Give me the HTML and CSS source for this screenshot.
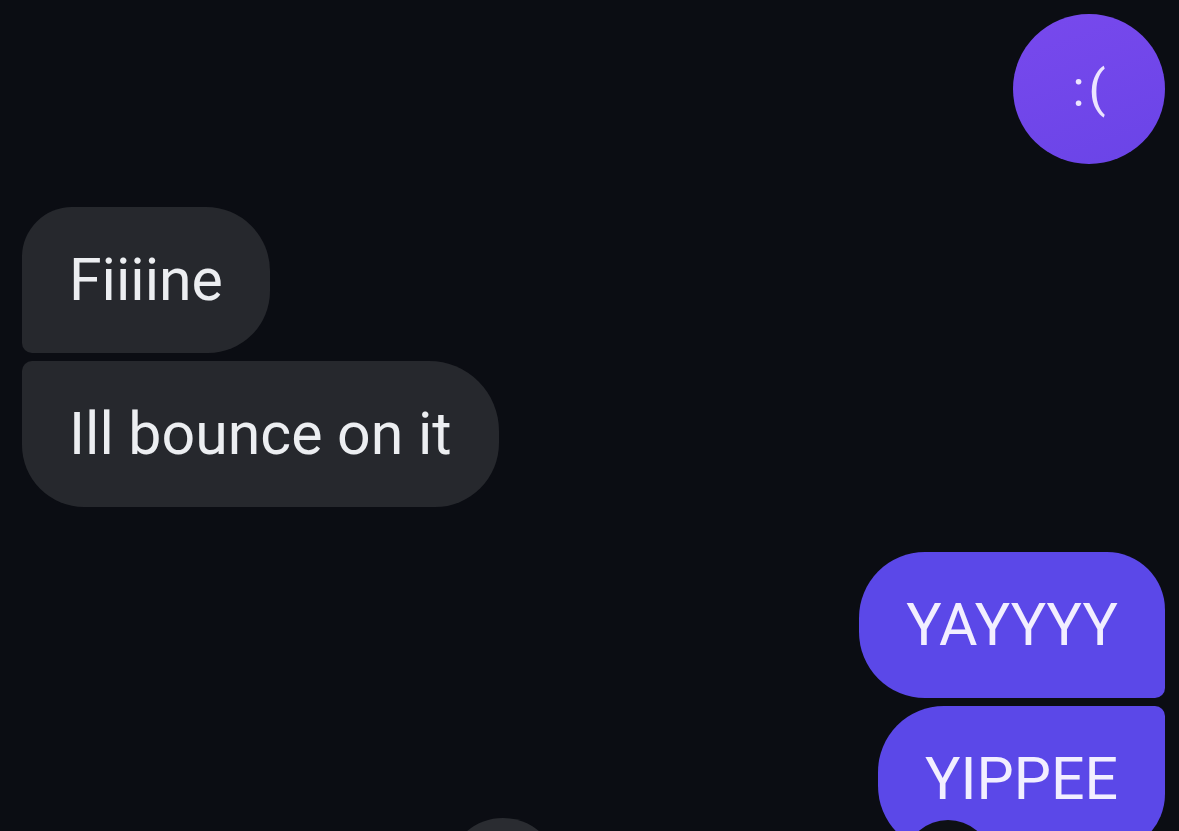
FILE: index.html
```html
<!DOCTYPE html>
<html lang="en">
<head>
<meta charset="utf-8">
<title>Messages</title>
<link rel="stylesheet" href="styles.css">
</head>
<body>
<main class="thread">
  <div class="row row-out">
    <div class="emoji-bubble">:(</div>
  </div>
  <div class="group group-in">
    <div class="bubble bubble-in in-first">Fiiiine</div>
    <div class="bubble bubble-in in-last">Ill bounce on it</div>
  </div>
  <div class="group group-out">
    <div class="bubble bubble-out out-first">YAYYYY</div>
    <div class="bubble bubble-out out-last">YIPPEE<span class="reaction reaction-dark"></span></div>
  </div>
  <span class="reaction reaction-grey"></span>
</main>
</body>
</html>
```
FILE: styles.css
```css
html, body {
  margin: 0;
  padding: 0;
  height: 100%;
}
body {
  background: #0b0d13;
  overflow: hidden;
  font-family: Roboto, "Liberation Sans", Arial, sans-serif;
}
.thread {
  position: relative;
  display: flex;
  flex-direction: column;
  padding: 14px 14px 0 22px;
  height: 831px;
  box-sizing: border-box;
  overflow: hidden;
}
.row {
  display: flex;
}
.row-out {
  justify-content: flex-end;
}
.emoji-bubble {
  width: 152px;
  height: 150px;
  border-radius: 50%;
  background: linear-gradient(160deg, #7849ed 0%, #6a44e7 100%);
  color: #ece4ff;
  font-size: 50px;
  font-weight: 400;
  display: flex;
  align-items: center;
  justify-content: center;
  letter-spacing: 4px;
  padding-left: 4px;
  box-sizing: border-box;
}
.group {
  display: flex;
  flex-direction: column;
  gap: 8px;
}
.group-in {
  margin-top: 43px;
  align-items: flex-start;
}
.group-out {
  margin-top: 45px;
  align-items: flex-end;
}
.bubble {
  position: relative;
  font-size: 59px;
  line-height: 68px;
  padding: 39px 47px;
  white-space: nowrap;
}
.bubble-in {
  background: #26282d;
  color: #eceef1;
}
.bubble-out {
  background: #5b48e8;
  color: #f2efff;
}
.in-first {
  border-radius: 50px 64px 62px 10px;
}
.in-last {
  border-radius: 10px 70px 64px 62px;
}
.out-first {
  border-radius: 66px 58px 10px 66px;
}
.out-last {
  border-radius: 66px 10px 58px 66px;
}
.reaction {
  position: absolute;
  display: block;
  border-radius: 50%;
}
.reaction-dark {
  left: 30px;
  top: 114px;
  width: 80px;
  height: 70px;
  background: #0e1015;
}
.reaction-grey {
  left: 452px;
  top: 818px;
  width: 102px;
  height: 90px;
  background: #2a2c31;
}
```
